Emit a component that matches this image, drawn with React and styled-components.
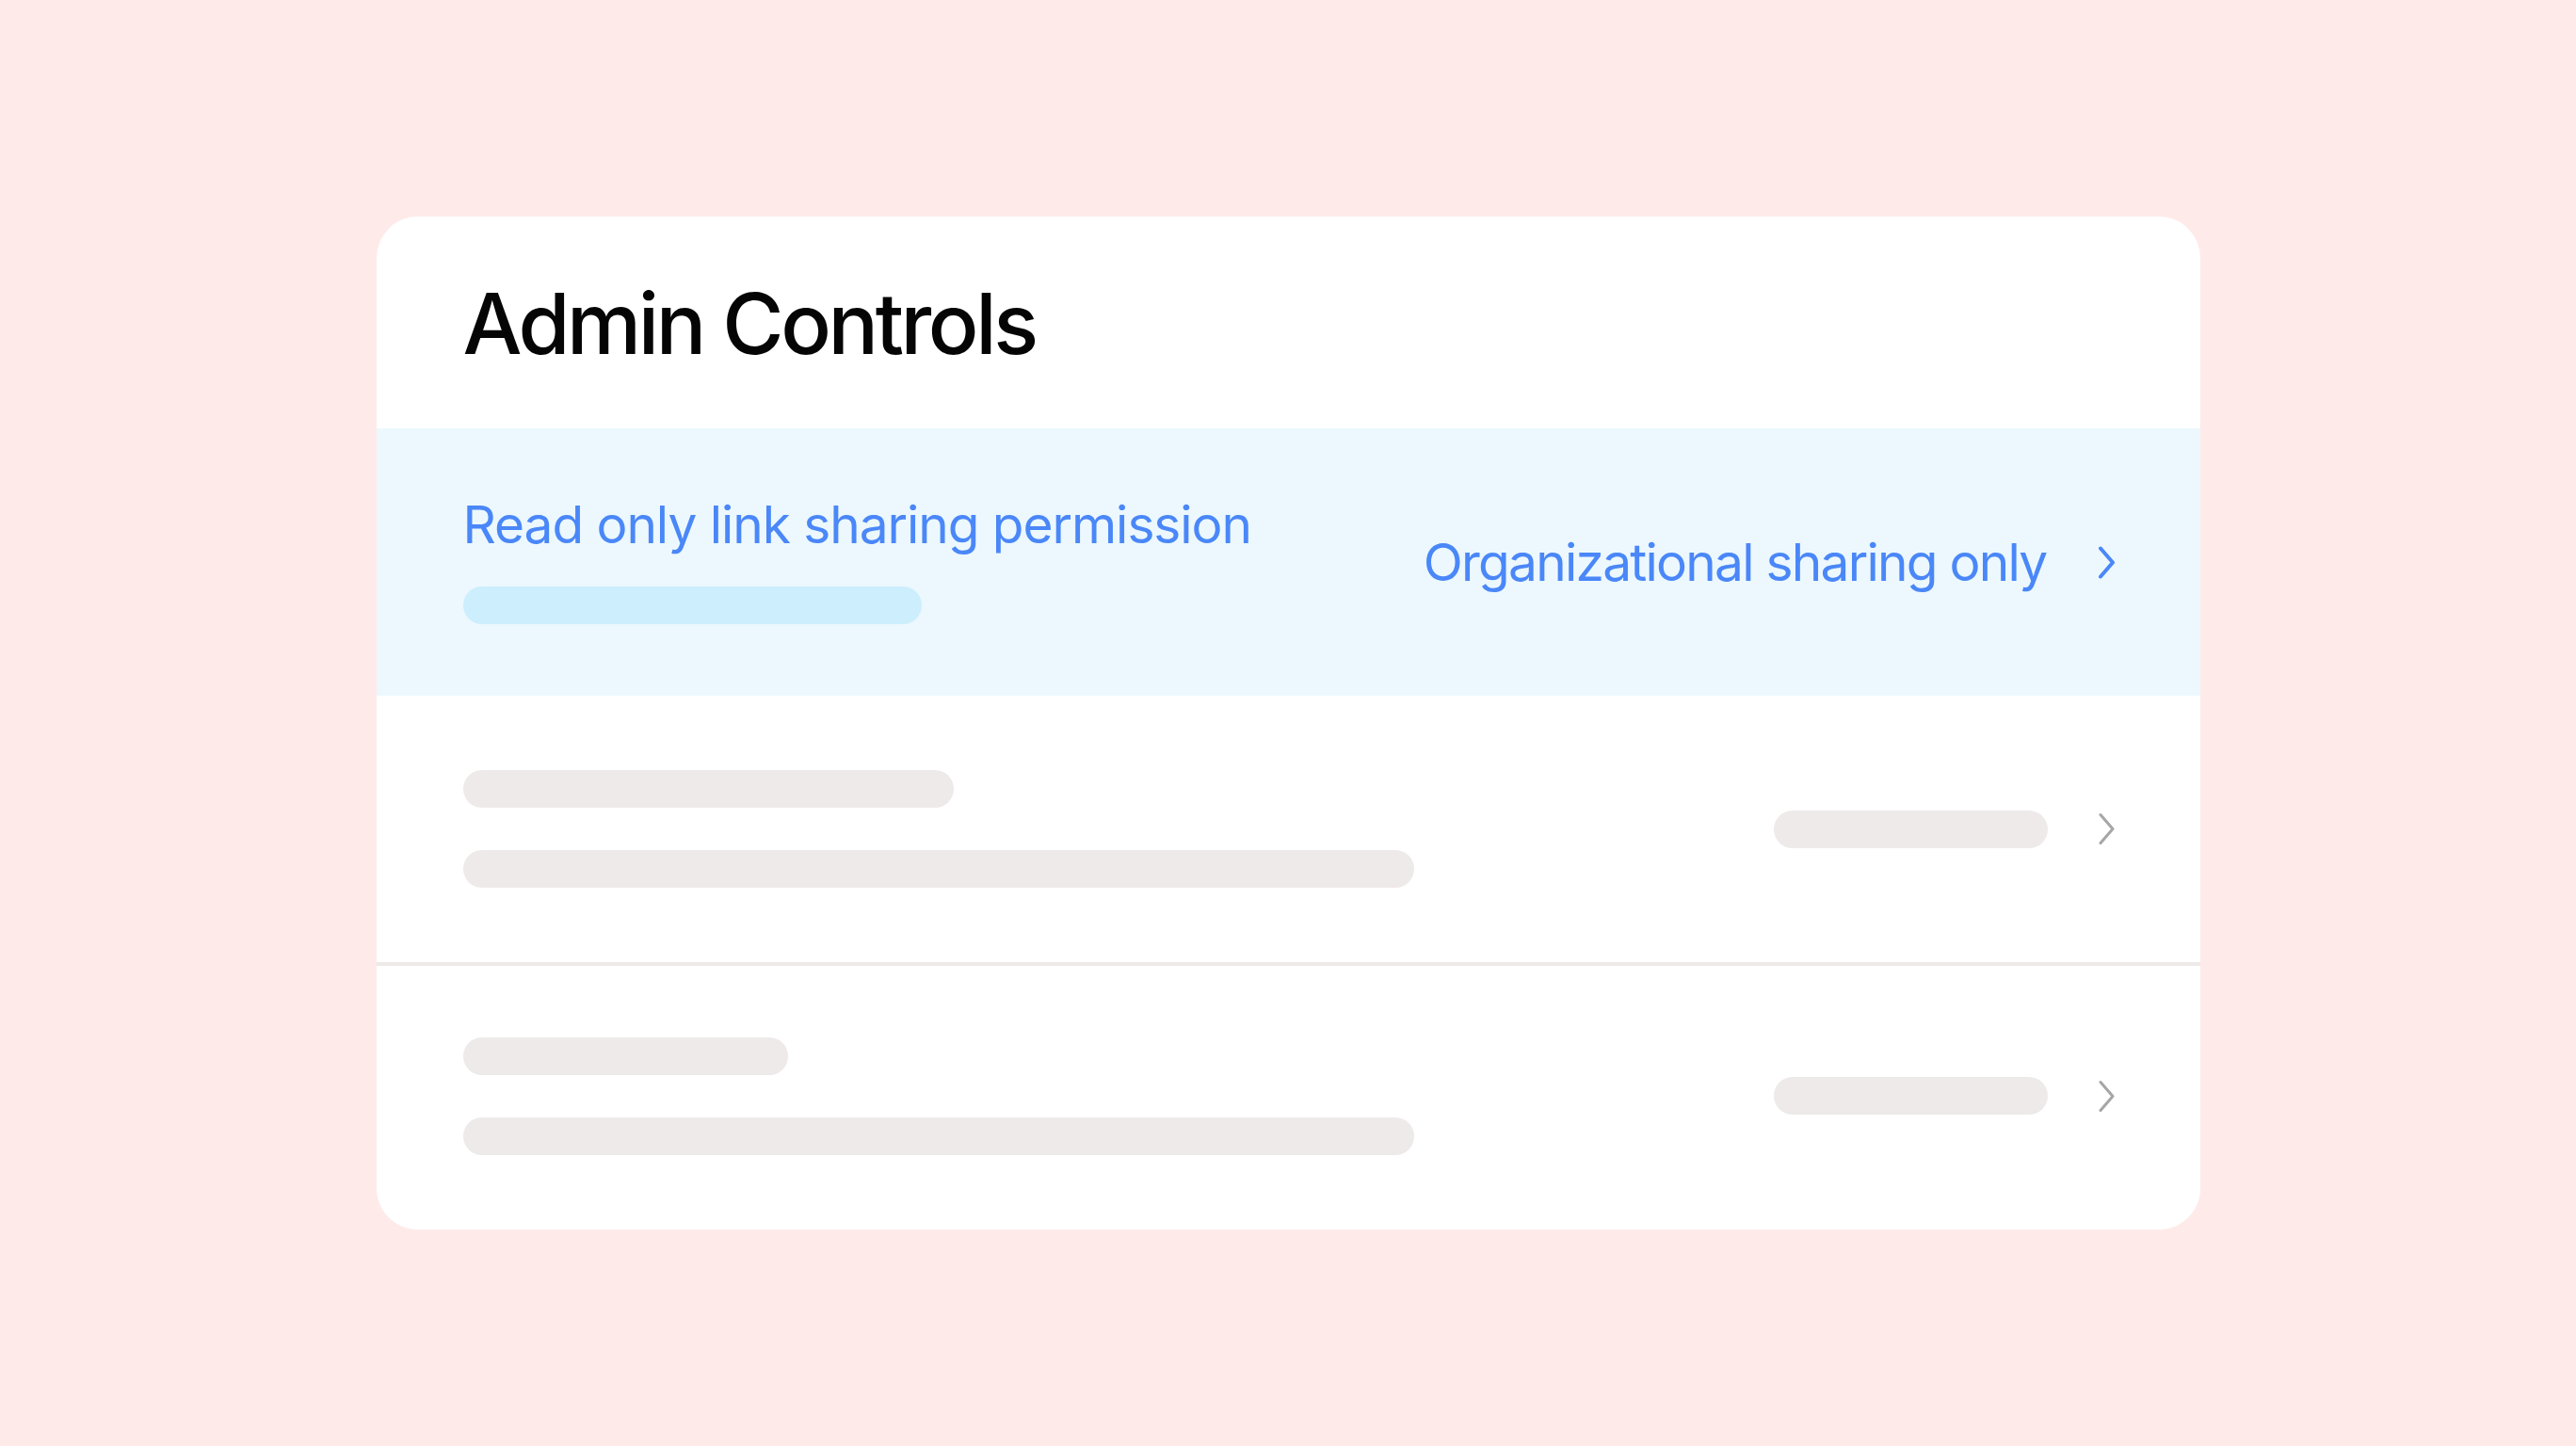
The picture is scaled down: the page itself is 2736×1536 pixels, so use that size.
import React from "react";
import styled, { createGlobalStyle } from "styled-components";

const GlobalStyle = createGlobalStyle`
  html, body {
    margin: 0;
    padding: 0;
    background: #FFEAEA;
  }
  body {
    font-family: Inter, "Noto Sans", "Liberation Sans", sans-serif;
  }
`;

const Page = styled.div`
  min-height: 100vh;
  display: flex;
  align-items: center;
  justify-content: center;
  background: #FFEAEA;
`;

const Card = styled.section`
  width: 1937px;
  background: #FFFFFF;
  border-radius: 44px;
  overflow: hidden;
  display: flex;
  flex-direction: column;
`;

const Header = styled.header`
  height: 225px;
  box-sizing: border-box;
  padding: 69px 92px 0;
`;

const Title = styled.h1`
  margin: 0;
  font-family: Inter, "Liberation Sans", sans-serif;
  font-size: 89px;
  line-height: 89px;
  font-weight: 500;
  letter-spacing: -3.4px;
  color: #050505;
`;

const Row = styled.div`
  height: ${(p) => p.$height}px;
  box-sizing: border-box;
  padding: 0 91px ${(p) => p.$bottom || 0}px 92px;
  display: flex;
  align-items: ${(p) => (p.$active ? "stretch" : "center")};
  justify-content: space-between;
  background: ${(p) => (p.$active ? "#ECF8FE" : "#FFFFFF")};
`;

const Divider = styled.div`
  height: 4px;
  background: #EEEAE9;
`;

const LeftCol = styled.div`
  display: flex;
  flex-direction: column;
  align-items: flex-start;
  gap: ${(p) => p.$gap}px;
  padding-top: ${(p) => p.$top || 0}px;
  align-self: ${(p) => (p.$top ? "flex-start" : "center")};
`;

const Label = styled.div`
  font-size: 55px;
  line-height: 66px;
  font-weight: 400;
  color: #4A87F8;
  letter-spacing: -1.05px;
  white-space: nowrap;
`;

const Bar = styled.div`
  height: 40px;
  width: ${(p) => p.$w}px;
  border-radius: 20px;
  background: ${(p) => (p.$blue ? "#CCEEFD" : "#EEEAE9")};
`;

const RightSide = styled.div`
  display: flex;
  align-items: center;
  gap: ${(p) => p.$gap}px;
  align-self: center;
`;

const Value = styled.div`
  font-size: 55px;
  line-height: 66px;
  color: #4A87F8;
  letter-spacing: -1.75px;
  white-space: nowrap;
`;

const Chevron = ({ color, width }) => (
  <svg width="17" height="35" viewBox="0 0 17 35" fill="none" style={{ display: "block" }}>
    <polyline
      points="2,2.5 15,17.5 2,32.5"
      stroke={color}
      strokeWidth={width}
      strokeLinecap="round"
      strokeLinejoin="round"
    />
  </svg>
);

export default function App() {
  return (
    <>
      <GlobalStyle />
      <Page>
        <Card>
          <Header>
            <Title>Admin Controls</Title>
          </Header>
          <Row $active $height={284}>
            <LeftCol $gap={33} $top={69}>
              <Label>Read only link sharing permission</Label>
              <Bar $blue $w={487} />
            </LeftCol>
            <RightSide $gap={55}>
              <Value>Organizational sharing only</Value>
              <Chevron color="#4A87F8" width={4} />
            </RightSide>
          </Row>
          <Row $height={283}>
            <LeftCol $gap={45}>
              <Bar $w={521} />
              <Bar $w={1010} />
            </LeftCol>
            <RightSide $gap={54}>
              <Bar $w={291} />
              <Chevron color="#A6A6A6" width={3} />
            </RightSide>
          </Row>
          <Divider />
          <Row $height={280} $bottom={4}>
            <LeftCol $gap={45}>
              <Bar $w={345} />
              <Bar $w={1010} />
            </LeftCol>
            <RightSide $gap={54}>
              <Bar $w={291} />
              <Chevron color="#A6A6A6" width={3} />
            </RightSide>
          </Row>
        </Card>
      </Page>
    </>
  );
}
